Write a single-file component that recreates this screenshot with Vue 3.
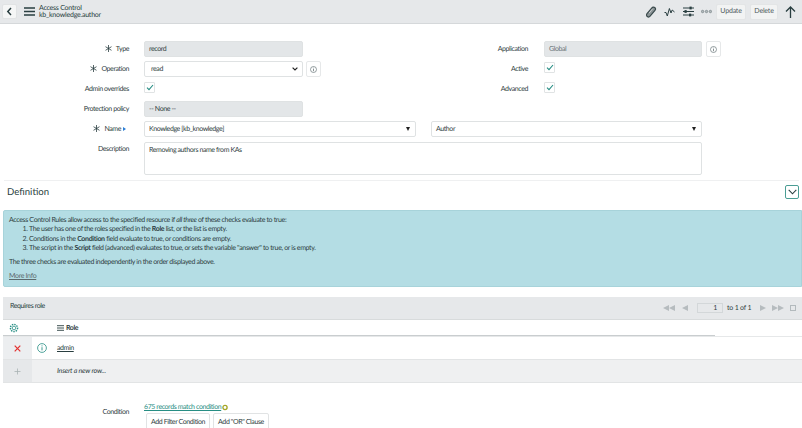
<template>
  <div class="page">
    <header class="topbar">
      <button class="back">
        <svg width="7" height="9" viewBox="0 0 7 9"><path d="M5 1 L1.8 4.5 L5 8" fill="none" stroke="#293e40" stroke-width="1.5" /></svg>
      </button>
      <svg class="menu" width="11" height="9" viewBox="0 0 11 9"><path d="M0 1h11M0 4.5h11M0 8h11" stroke="#293e40" stroke-width="1.3" /></svg>
      <div class="title">
        <div>Access Control</div>
        <div>kb_knowledge.author</div>
      </div>
      <div class="actions">
        <svg class="a1" width="12" height="12" viewBox="0 0 12 12"><rect x="4" y="0.2" width="4" height="11.6" rx="2" transform="rotate(40 6 6)" fill="#8b9496" stroke="#3a4a4c" stroke-width="1.2" /><path d="M7.6 2.8 L4.2 7" stroke="#e6e8ea" stroke-width="0.7" /></svg>
        <svg class="a2" width="11" height="10" viewBox="0 0 11 10"><path d="M0.5 5.5 L2 5.5 L3.3 9 L5.4 1.5 L7 6 L8.2 3 L10.5 5" fill="none" stroke="#293e40" stroke-width="1" /></svg>
        <svg class="a3" width="11" height="11" viewBox="0 0 11 11"><path d="M0 2h11M0 5.5h11M0 9h11" stroke="#293e40" stroke-width="1" /><rect x="6.5" y="0.6" width="2.2" height="2.8" fill="#293e40" /><rect x="1.5" y="4.1" width="2.2" height="2.8" fill="#293e40" /><rect x="6" y="7.6" width="2.2" height="2.8" fill="#293e40" /></svg>
        <svg class="a4" width="11" height="5" viewBox="0 0 11 5"><circle cx="1.6" cy="2.5" r="1.2" fill="#b5bcbe" stroke="#7c888b" stroke-width="0.8" /><circle cx="5.5" cy="2.5" r="1.2" fill="#b5bcbe" stroke="#7c888b" stroke-width="0.8" /><circle cx="9.4" cy="2.5" r="1.2" fill="#b5bcbe" stroke="#7c888b" stroke-width="0.8" /></svg>
        <button class="act-btn update">Update</button>
        <button class="act-btn delete">Delete</button>
        <svg class="up" width="11" height="12" viewBox="0 0 11 12"><path d="M5.5 12V1M1 5.5 L5.5 1 L10 5.5" fill="none" stroke="#293e40" stroke-width="1.3" /></svg>
      </div>
    </header>

    <section class="form">
      <div class="row">
        <div class="left">
          <label class="label"><svg class="star" width="7" height="7" viewBox="0 0 7 7"><path d="M3.5 0v7M.5 1.7l6 3.6M6.5 1.7l-6 3.6" stroke="#293e40" stroke-width="0.8" /></svg>Type</label>
          <div class="input readonly">record</div>
        </div>
        <div class="right">
          <label class="label">Application</label>
          <div class="input readonly"><span class="dim">Global</span></div>
          <button class="info-btn"><svg width="7" height="7" viewBox="0 0 7 7"><circle cx="3.5" cy="3.5" r="3" fill="none" stroke="#69767a" stroke-width="0.7" /><path d="M3.5 3v2.2M3.5 1.7v.7" stroke="#69767a" stroke-width="0.8" /></svg></button>
        </div>
      </div>
      <div class="row">
        <div class="left">
          <label class="label"><svg class="star" width="7" height="7" viewBox="0 0 7 7"><path d="M3.5 0v7M.5 1.7l6 3.6M6.5 1.7l-6 3.6" stroke="#293e40" stroke-width="0.8" /></svg>Operation</label>
          <div class="input select">
            <span>read</span>
            <svg width="6" height="4" viewBox="0 0 6 4"><path d="M0.6 0.6 L3 3 L5.4 0.6" fill="none" stroke="#222" stroke-width="1.2" /></svg>
          </div>
          <button class="info-btn"><svg width="7" height="7" viewBox="0 0 7 7"><circle cx="3.5" cy="3.5" r="3" fill="none" stroke="#69767a" stroke-width="0.7" /><path d="M3.5 3v2.2M3.5 1.7v.7" stroke="#69767a" stroke-width="0.8" /></svg></button>
        </div>
        <div class="right">
          <label class="label">Active</label>
          <span class="check"><svg width="8" height="7" viewBox="0 0 8 7"><path d="M1 3.6 L3 5.6 L7 1" fill="none" stroke="#278e84" stroke-width="1.1" /></svg></span>
        </div>
      </div>
      <div class="row">
        <div class="left">
          <label class="label">Admin overrides</label>
          <span class="check"><svg width="8" height="7" viewBox="0 0 8 7"><path d="M1 3.6 L3 5.6 L7 1" fill="none" stroke="#278e84" stroke-width="1.1" /></svg></span>
        </div>
        <div class="right">
          <label class="label">Advanced</label>
          <span class="check"><svg width="8" height="7" viewBox="0 0 8 7"><path d="M1 3.6 L3 5.6 L7 1" fill="none" stroke="#278e84" stroke-width="1.1" /></svg></span>
        </div>
      </div>
      <div class="row">
        <div class="left">
          <label class="label">Protection policy</label>
          <div class="input readonly">-- None --</div>
        </div>
      </div>
      <div class="row">
        <label class="label name-label"><svg class="star" width="7" height="7" viewBox="0 0 7 7"><path d="M3.5 0v7M.5 1.7l6 3.6M6.5 1.7l-6 3.6" stroke="#293e40" stroke-width="0.8" /></svg>Name<span class="tri"></span></label>
        <div class="input combo name-box">Knowledge [kb_knowledge]<span class="caret"></span></div>
        <div class="input combo field-box">Author<span class="caret"></span></div>
      </div>
      <div class="row desc-row">
        <label class="label">Description</label>
        <div class="input desc">Removing authors name from KAs</div>
      </div>
    </section>

    <div class="section-head">
      <h2>Definition</h2>
      <button class="collapse">
        <svg width="9" height="6" viewBox="0 0 9 6"><path d="M0.7 0.8 L4.5 4.8 L8.3 0.8" fill="none" stroke="#293e40" stroke-width="1.1" /></svg>
      </button>
    </div>

    <div class="notice">
      <p>Access Control Rules allow access to the specified resource if <i>all three</i> of these checks evaluate to true:</p>
      <ol>
        <li>The user has one of the roles specified in the <b>Role</b> list, or the list is empty.</li>
        <li>Conditions in the <b>Condition</b> field evaluate to true, or conditions are empty.</li>
        <li>The script in the <b>Script</b> field (advanced) evaluates to true, or sets the variable "answer" to true, or is empty.</li>
      </ol>
      <p class="gap">The three checks are evaluated independently in the order displayed above.</p>
      <p class="gap"><a class="more">More Info</a></p>
    </div>

    <div class="list">
      <div class="list-head">
        <span class="list-title">Requires role</span>
        <div class="pager">
          <span class="arrows first"><span class="pt l"></span><span class="pt l"></span></span>
          <span class="arrows prev"><span class="pt l"></span></span>
          <span class="page-num">1</span>
          <span class="of">to 1 of 1</span>
          <span class="arrows next"><span class="pt r"></span></span>
          <span class="arrows last"><span class="pt r"></span><span class="pt r"></span></span>
          <span class="mini"></span>
        </div>
      </div>
      <div class="list-cols">
        <svg class="gear" width="10" height="10" viewBox="0 0 10 10"><circle cx="5" cy="5" r="1.8" fill="none" stroke="#278e84" stroke-width="0.8" /><circle cx="5" cy="5" r="3.6" fill="none" stroke="#278e84" stroke-width="1.4" stroke-dasharray="1.4 1" /></svg>
        <svg class="lines" width="7" height="6" viewBox="0 0 7 6"><path d="M0 .7h7M0 3h7M0 5.3h7" stroke="#293e40" stroke-width="0.9" /></svg>
        <span>Role</span>
      </div>
      <div class="list-row">
        <div class="del"><svg width="7" height="7" viewBox="0 0 7 7"><path d="M.7.7l5.6 5.6M6.3.7L.7 6.3" stroke="#e3302f" stroke-width="1.2" /></svg></div>
        <svg class="row-info" width="10" height="10" viewBox="0 0 10 10"><circle cx="5" cy="5" r="4.4" fill="none" stroke="#278e84" stroke-width="0.8" /><path d="M5 4.2v3.2M5 2.4v1" stroke="#278e84" stroke-width="0.9" /></svg>
        <a class="link">admin</a>
      </div>
      <div class="list-row insert">
        <div class="del"><svg width="7" height="7" viewBox="0 0 7 7"><path d="M3.5.5v6M.5 3.5h6" stroke="#a9b2b4" stroke-width="0.8" /></svg></div>
        <i>Insert a new row...</i>
      </div>
    </div>

    <div class="condition">
      <label class="label">Condition</label>
      <div>
        <div class="match"><a class="teal">675 records match condition</a><svg width="6" height="7" viewBox="0 0 6 7"><circle cx="3" cy="3.5" r="2.1" fill="none" stroke="#a5a525" stroke-width="1.3" /></svg></div>
        <div class="cond-btns">
          <button>Add Filter Condition</button>
          <button>Add "OR" Clause</button>
        </div>
      </div>
    </div>
  </div>
</template>

<script setup>
</script>

<style>
html, body { margin: 0; overflow: hidden; }
</style>

<style scoped>
.page {
  width: 802px;
  height: 428px;
  overflow: hidden;
  background: #fff;
  color: #303e41;
  font-family: Lato, "Open Sans", sans-serif;
  font-size: 7px;
  letter-spacing: -0.4px;
  line-height: 9px;
  text-rendering: geometricPrecision;
}
button { font: inherit; color: inherit; padding: 0; letter-spacing: inherit; text-rendering: inherit; }
p { margin: 0; }

.topbar {
  height: 23px;
  background: #e6e8ea;
  border-bottom: 1px solid #d5d8da;
  display: flex;
  align-items: center;
  padding: 0 5px 0 2px;
}
.back {
  width: 15px;
  height: 15px;
  background: #f5f6f6;
  border: 1px solid #e1e3e4;
  border-radius: 2px;
  display: flex;
  align-items: center;
  justify-content: center;
}
.menu { margin-left: 7px; }
.title { margin-left: 4px; color: #293e40; line-height: 7px; letter-spacing: -0.22px; }
.actions { margin-left: auto; display: flex; align-items: center; }
.a1 { margin-right: 7px; }
.a2 { margin-right: 8px; }
.a3 { margin-right: 7px; }
.a4 { margin-right: 4px; }
.act-btn {
  height: 16px;
  background: #f2f3f3;
  border: 1px solid #e3e5e6;
  border-radius: 2px;
  color: #4f5b5e;
  letter-spacing: -0.2px;
}
.update { width: 30px; margin-right: 4px; }
.delete { width: 28px; margin-right: 7px; }
.up { margin-right: 1px; }

.form { padding-top: 17px; }
.row { display: flex; height: 20px; }
.left { width: 321px; display: flex; }
.right { display: flex; }
.label {
  width: 129px;
  margin-right: 15px;
  text-align: right;
  line-height: 16px;
  flex: none;
}
.right .label { width: 207px; margin-right: 16px; }
.star { margin-right: 4px; vertical-align: -1px; }
.input {
  box-sizing: border-box;
  width: 159px;
  height: 16px;
  border: 1px solid #dfe2e3;
  border-radius: 2px;
  padding: 0 4px;
  line-height: 14px;
  flex: none;
}
.right .input { width: 158px; }
.readonly { background: #e3e6e8; }
.dim { color: #687478; }
.select { display: flex; align-items: center; justify-content: space-between; padding: 0 4px 0 6px; }
.info-btn {
  width: 15px;
  height: 16px;
  margin-left: 3px;
  background: #fff;
  border: 1px solid #e6e8e9;
  border-radius: 2px;
  display: flex;
  align-items: center;
  justify-content: center;
  flex: none;
}
.right .info-btn { margin-left: 4px; }
.check {
  box-sizing: border-box;
  width: 11px;
  height: 11px;
  margin-top: 1px;
  border: 1px solid #e0e3e4;
  border-radius: 1px;
  display: flex;
  align-items: center;
  justify-content: center;
  flex: none;
}
.combo { display: flex; align-items: center; justify-content: space-between; padding-right: 5px; }
.name-box { width: 272px; }
.field-box { width: 271px; margin-left: 15px; }
.caret { width: 0; height: 0; border: 2.5px solid transparent; border-top: 4px solid #222; border-bottom: 0; }
.tri {
  display: inline-block;
  width: 0;
  height: 0;
  margin-left: 2px;
  border: 2px solid transparent;
  border-left: 3px solid #2a7dd6;
  border-right: 0;
}
.name-label { width: 126px; margin-right: 18px; }
.desc-row { height: 38px; margin-top: 1px; }
.desc { width: 558px; height: 33px; padding-top: 0; line-height: 14px; }
.desc-row .label { line-height: 14px; }

.section-head {
  box-sizing: border-box;
  height: 30px;
  margin: 0 3px 0 4px;
  border-top: 1px solid #eff0f1;
  display: flex;
  align-items: flex-start;
  justify-content: space-between;
  padding: 4px 0 0 3px;
}
h2 { margin: 1px 0 0; font-size: 9.6px; line-height: 14px; font-weight: 400; color: #293e40; letter-spacing: 0; }
.collapse {
  width: 14px;
  height: 14px;
  background: #fff;
  border: 1px solid #4a9d94;
  border-radius: 2px;
  display: flex;
  align-items: center;
  justify-content: center;
}

.notice {
  box-sizing: border-box;
  height: 77px;
  margin: 0 0 10px 3px;
  background: #b4dde4;
  border: 1px solid #a7d3da;
  border-radius: 2px 0 0 2px;
  padding: 5px 5px;
  color: #2f4042;
  letter-spacing: -0.34px;
  line-height: 9.3px;
}
.notice ol { margin: 0; padding-left: 20px; }
.notice .gap { margin-top: 4.7px; }
.more { color: #5b6a6d; text-decoration: underline; }

.list { margin-left: 3px; }
.list-head {
  box-sizing: border-box;
  height: 23px;
  background: #e6e8ea;
  border-bottom: 1px solid #d8dbdc;
  display: flex;
  align-items: center;
  justify-content: space-between;
  padding: 0 6px 7px 7px;
}
.list-title { color: #293e40; margin-top: 3px; }
.pager { display: flex; align-items: center; padding-top: 7px; letter-spacing: -0.2px; }
.arrows { display: flex; }
.first { margin-right: 7px; }
.prev { margin-right: 9px; }
.next { margin-right: 6px; margin-left: 10px; }
.last { margin-right: 6px; }
.pt { width: 0; height: 0; border: 3px solid transparent; }
.pt.l { border-right: 6px solid #b6bcbf; border-left: 0; }
.pt.r { border-left: 6px solid #b6bcbf; border-right: 0; }
.page-num {
  box-sizing: border-box;
  width: 26px;
  height: 10px;
  border: 1px solid #d3d7d9;
  text-align: right;
  padding-right: 5px;
  line-height: 8px;
}
.of { width: 23px; margin-left: 4px; white-space: nowrap; }
.mini { box-sizing: border-box; width: 6px; height: 6px; border: 1px solid #b3babd; }
.list-cols {
  height: 16px;
  border-bottom: 1px solid #e6e8e9;
  background: linear-gradient(#c9cdcf, #c9cdcf) no-repeat 0 100% / 712px 1px;
  display: flex;
  align-items: center;
  font-weight: 700;
}
.gear { margin-left: 6px; margin-right: 38px; }
.lines { margin-right: 2px; }
.list-row {
  height: 22px;
  border-bottom: 1px solid #e2e4e5;
  display: flex;
  align-items: center;
}
.del {
  width: 29px;
  height: 100%;
  background: #eceef0;
  display: flex;
  align-items: center;
  justify-content: center;
  flex: none;
}
.row-info { margin-left: 5px; margin-right: 10px; }
.link { color: #293e40; text-decoration: underline; }
.insert { background: #eff0f1; }
.insert .del { background: #e6e8ea; }
.insert i { margin-left: 25px; letter-spacing: -0.2px; }

.condition { display: flex; margin-top: 20px; }
.condition .label { line-height: 9px; margin-top: 5px; }
.match { line-height: 9px; display: flex; align-items: center; }
.teal { color: #278e84; text-decoration: underline; }
.match svg { margin-left: 1px; }
.cond-btns { display: flex; gap: 3px; margin-left: 2px; margin-top: 1px; }
.cond-btns button {
  box-sizing: border-box;
  height: 18px;
  padding: 0 4px;
  background: #fff;
  border: 1px solid #e1e3e4;
  border-radius: 2px;
}
</style>
